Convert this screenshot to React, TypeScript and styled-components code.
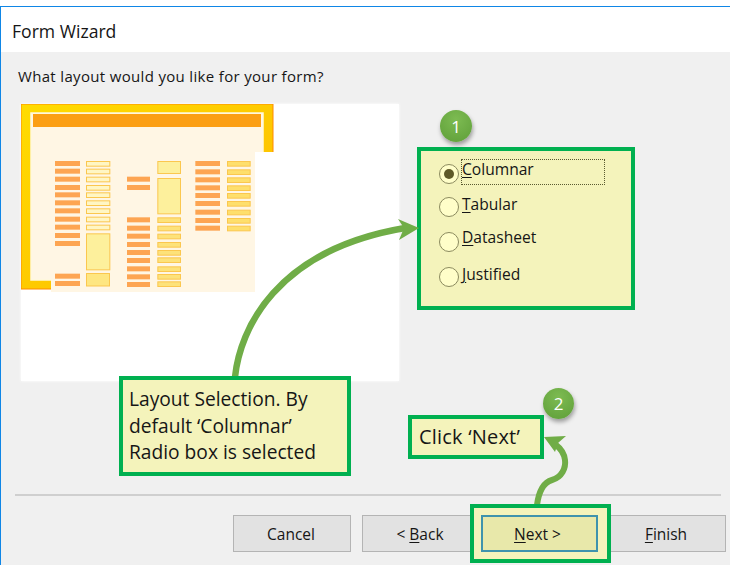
import React from 'react'
import styled, { createGlobalStyle } from 'styled-components'

const GlobalStyle = createGlobalStyle`
  html, body {
    margin: 0;
    padding: 0;
    background: #fff;
    font-family: "Open Sans", "Noto Sans", sans-serif;
    color: #161616;
  }
`

const GREEN = '#00b050'
const NOTE = '#f4f3bb'

const Page = styled.div`
  position: relative;
  width: 730px;
  height: 565px;
  padding-top: 6px;
  box-sizing: border-box;
  overflow: hidden;
  background: #fff;
`

const Window = styled.div`
  display: flex;
  flex-direction: column;
  height: 100%;
  box-sizing: border-box;
  border-top: 1px solid #0f86e6;
  border-left: 1px solid #0f86e6;
`

const TitleBar = styled.div`
  height: 45px;
  padding: 2px 0 0 11px;
  box-sizing: border-box;
  display: flex;
  align-items: center;
  font-size: 17.6px;
  background: #fff;
`

const Body = styled.div`
  flex: 1;
  display: flex;
  flex-direction: column;
  background: #f0f0f0;
`

const Prompt = styled.div`
  height: 52px;
  padding: 12px 0 0 17px;
  box-sizing: border-box;
  font-size: 15px;
  letter-spacing: 0.33px;
  line-height: 24px;
`

const Middle = styled.div`
  display: flex;
  align-items: flex-start;
  gap: 18px;
  padding-left: 20px;
`

const Preview = styled.div`
  width: 378px;
  height: 277px;
  background: #fff;
  box-shadow: 0 0 3px #fff;
`

const Options = styled.div`
  position: relative;
  width: 218px;
  height: 163px;
  margin-top: 43px;
  padding-top: 8px;
  box-sizing: border-box;
  border: 4px solid ${GREEN};
  background: ${NOTE};
`

const Badge = styled.div<{ $size: number }>`
  position: absolute;
  width: ${p => p.$size}px;
  height: ${p => p.$size}px;
  border-radius: 50%;
  display: flex;
  align-items: center;
  justify-content: center;
  color: #fff;
  font-size: 17px;
  background: radial-gradient(circle at 50% 30%, #7dbb52, #5e9e38);
  box-shadow: 1px 3px 4px rgba(0, 0, 0, 0.35);
`

const OptionBadge = styled(Badge)`
  top: -41px;
  left: 19px;
`

const OptionRow = styled.div<{ $top: number }>`
  display: flex;
  align-items: flex-start;
  height: 26px;
  margin-top: ${p => p.$top}px;
  padding-left: 18px;
  font-size: 15.6px;
`

const Radio = styled.span<{ $drop: number; $checked?: boolean }>`
  flex: none;
  width: 20px;
  height: 20px;
  margin-top: ${p => p.$drop}px;
  box-sizing: border-box;
  border: 1.5px solid #8b8a5e;
  border-radius: 50%;
  background: #fffec9;
  display: flex;
  align-items: center;
  justify-content: center;

  &::after {
    content: '';
    display: ${p => (p.$checked ? 'block' : 'none')};
    width: 10px;
    height: 10px;
    border-radius: 50%;
    background: #5f5a28;
  }
`

const OptionLabel = styled.span<{ $focused?: boolean }>`
  display: block;
  width: 144px;
  height: 26px;
  margin-left: 2px;
  padding-left: 1px;
  box-sizing: border-box;
  line-height: 21px;
  outline: ${p => (p.$focused ? '1px dotted #5a5a30' : 'none')};
  outline-offset: -1px;
`

const AccessKey = styled.span`
  text-decoration: underline;
  text-underline-offset: 2px;
`

const Footer = styled.div`
  margin-top: auto;
  padding: 0 0 13px 14px;
`

const Divider = styled.div`
  width: 706px;
  height: 2px;
  background: #cfcfcf;
  margin-bottom: 19px;
`

const Buttons = styled.div`
  display: flex;
  padding-left: 218px;
`

const Button = styled.div<{ $gap?: number }>`
  width: 118px;
  height: 37px;
  margin-left: ${p => p.$gap ?? 0}px;
  padding-right: 2px;
  box-sizing: border-box;
  display: flex;
  align-items: center;
  justify-content: center;
  font-size: 15.5px;
  border: 1.5px solid #b4b4b4;
  background: #e2e2e2;
`

const NextButton = styled(Button)`
  position: relative;
  width: 117px;
  padding-right: 4px;
  background: #e8e8aa;
  border: 2px solid #3f93ad;
  z-index: 1;

  &::before {
    content: '';
    position: absolute;
    inset: -13px -15px -13px -13px;
    border: 4px solid ${GREEN};
    background: ${NOTE};
    z-index: -2;
  }

  &::after {
    content: '';
    position: absolute;
    inset: -2px;
    border: 2px solid #3f93ad;
    background: #e8e8aa;
    z-index: -1;
  }
`

const Callout = styled.div`
  position: absolute;
  box-sizing: border-box;
  border: 4px solid ${GREEN};
  background: ${NOTE};
  line-height: 26.5px;
`

const LayoutCallout = styled(Callout)`
  left: 119px;
  top: 376px;
  width: 232px;
  height: 100px;
  padding: 6px 0 0 6px;
  font-size: 19.2px;
`

const NextCallout = styled(Callout)`
  left: 408px;
  top: 415px;
  width: 136px;
  height: 44px;
  padding: 5px 0 0 7px;
  font-size: 20px;
  letter-spacing: 0.2px;
`

const StepBadge = styled(Badge)`
  left: 543px;
  top: 388px;
`

const ArrowLayer = styled.svg`
  position: absolute;
  inset: 0;
  pointer-events: none;
`

const LABEL = '#fda552'
const FIELD = '#fbc74e'

const Bar = ({ x, w, top, h = 15 }: { x: number; w: number; top: number; h?: number }) => (
  <rect x={x / 3 - 21} y={90 + top / 3 - 104} width={w / 3} height={h / 3} fill={LABEL} />
)

const Field = ({ x, w, top, h = 17, fill = '#fff6c4' }: { x: number; w: number; top: number; h?: number; fill?: string }) => (
  <rect
    x={x / 3 - 21 + 0.5}
    y={90 + top / 3 - 104 + 0.5}
    width={w / 3 - 1}
    height={h / 3 - 1}
    fill={fill}
    stroke={FIELD}
    strokeWidth={1}
  />
)

const col1 = [213, 236, 260, 285, 307, 331, 355, 380, 404, 429, 453, 551, 573]
const col2 = [213, 236, 260, 285, 307, 331, 355, 380, 404]
const col3 = [260, 285, 382, 407, 431, 456, 480, 504, 529, 553, 576]
const col4 = [382, 407, 431, 456, 480, 502, 529, 552, 574]
const col5 = [213, 238, 262, 286, 309, 333, 359, 384, 407]

const LayoutPreview = () => (
  <svg width="378" height="277" viewBox="0 0 378 277">
    <defs>
      <linearGradient id="frame" x1="0" y1="0" x2="1" y2="1">
        <stop offset="0" stopColor="#ffdc00" />
        <stop offset="1" stopColor="#fdb900" />
      </linearGradient>
    </defs>
    <rect x="0" y="0" width="252" height="185" fill="url(#frame)" stroke="#ff8a00" strokeWidth="1" />
    <rect x="10" y="9" width="232" height="167" fill="#fff6e4" stroke="#fff8dc" strokeWidth="1.5" />
    <rect x="12" y="10" width="228" height="13" fill="#fb9f14" />
    <rect x="234" y="48" width="144" height="229" fill="#fff" />
    <rect x="30" y="23" width="204" height="165" fill="#fff6e4" />
    {col1.map(t => <Bar key={t} x={165} w={75} top={t} />)}
    {col2.map(t => <Field key={t} x={258} w={73} top={t} />)}
    <Field x={258} w={73} top={430} h={111} fill="#fdf09c" />
    <rect x={65.5} y={169.5} width={23} height={12.5} fill="#fee681" stroke={FIELD} />
    {col3.map(t => <Bar key={t} x={381} w={69} top={t} />)}
    <Field x={472} w={71} top={213} h={39} fill="#fdf09c" />
    <Field x={472} w={71} top={264} h={109} fill="#fdf09c" />
    {col4.map(t => <Field key={t} x={472} w={71} top={t} fill="#fde27a" />)}
    {col5.map(t => <Bar key={t} x={586} w={74} top={t} />)}
    {col5.map(t => <Field key={t} x={681} w={71} top={t} fill="#fedf6c" />)}
  </svg>
)

const options = [
  { key: 'C', rest: 'olumnar', top: 0, drop: 5, checked: true },
  { key: 'T', rest: 'abular', top: 9, drop: 3 },
  { key: 'D', rest: 'atasheet', top: 7, drop: 5 },
  { key: 'J', rest: 'ustified', top: 11, drop: 3 }
]

export default function App() {
  return (
    <Page>
      <GlobalStyle />
      <Window>
        <TitleBar>Form Wizard</TitleBar>
        <Body>
          <Prompt>What layout would you like for your form?</Prompt>
          <Middle>
            <Preview>
              <LayoutPreview />
            </Preview>
            <Options>
              <OptionBadge $size={32}>1</OptionBadge>
              {options.map((o, i) => (
                <OptionRow key={o.key} $top={o.top}>
                  <Radio $drop={o.drop} $checked={o.checked} />
                  <OptionLabel $focused={i === 0}>
                    <AccessKey>{o.key}</AccessKey>
                    {o.rest}
                  </OptionLabel>
                </OptionRow>
              ))}
            </Options>
          </Middle>
          <Footer>
            <Divider />
            <Buttons>
              <Button>Cancel</Button>
              <Button $gap={11}>
                &lt;&nbsp;<AccessKey>B</AccessKey>ack
              </Button>
              <NextButton $gap={1}>
                <AccessKey>N</AccessKey>ext &gt;
              </NextButton>
              <Button $gap={10}>
                <AccessKey>F</AccessKey>inish
              </Button>
            </Buttons>
          </Footer>
        </Body>
      </Window>

      <ArrowLayer width="730" height="565" viewBox="0 0 730 565">
        <path d="M235 377 C240 330 275 250 405 228" fill="none" stroke="#70ad47" strokeWidth="6.5" />
        <path d="M419 228 L398 219 L404 228 L399 240 Z" fill="#70ad47" />
        <path
          d="M537 505 C539 490 545 482 552 480 C562 477 566 468 565 460 C564 452 560 448 556 445"
          fill="none"
          stroke="#70ad47"
          strokeWidth="6"
        />
        <path d="M544 437 L566 436 L558 443 L555 452 Z" fill="#70ad47" />
      </ArrowLayer>

      <LayoutCallout>
        Layout Selection. By
        <br />
        default ‘Columnar’
        <br />
        Radio box is selected
      </LayoutCallout>
      <NextCallout>Click ‘Next’</NextCallout>
      <StepBadge $size={31}>2</StepBadge>
    </Page>
  )
}
